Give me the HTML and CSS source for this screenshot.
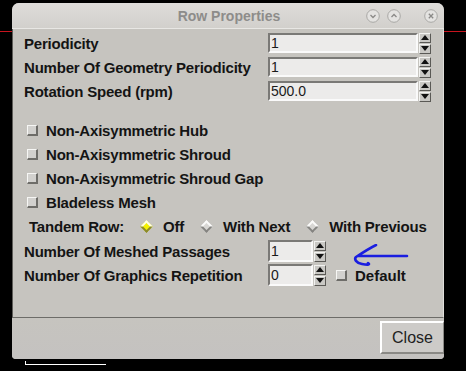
FILE: index.html
```html
<!DOCTYPE html>
<html lang="en">
<head>
  <meta charset="UTF-8" />
  <title>Row Properties</title>
  <link rel="stylesheet" href="styles.css">
</head>
<body>
  <div class="window">
    <div class="titlebar">
      <span class="title">Row Properties</span>
      <div class="wm-buttons">
        <span class="wm-btn">
          <svg width="14" height="14" viewBox="0 0 14 14"><circle cx="7" cy="7" r="6.3" fill="#e4e3e1" stroke="#a9a8a5"/><path d="M4.5 6 L7 8.5 L9.5 6" fill="none" stroke="#8a8987" stroke-width="1.3"/></svg>
        </span>
        <span class="wm-btn">
          <svg width="14" height="14" viewBox="0 0 14 14"><circle cx="7" cy="7" r="6.3" fill="#e4e3e1" stroke="#a9a8a5"/><path d="M4.5 8 L7 5.5 L9.5 8" fill="none" stroke="#8a8987" stroke-width="1.3"/></svg>
        </span>
        <span class="wm-btn close-x">
          <svg width="14" height="14" viewBox="0 0 14 14"><circle cx="7" cy="7" r="6.3" fill="#e4e3e1" stroke="#a9a8a5"/><path d="M4.8 4.8 L9.2 9.2 M9.2 4.8 L4.8 9.2" fill="none" stroke="#8a8987" stroke-width="1.3"/></svg>
        </span>
      </div>
    </div>

    <div class="panel">
      <div class="field-row">
        <span class="label">Periodicity</span>
        <div class="spin">
          <div class="input wide">1</div>
          <div class="arrows"><span class="up"></span><span class="down"></span></div>
        </div>
      </div>
      <div class="field-row">
        <span class="label">Number Of Geometry Periodicity</span>
        <div class="spin">
          <div class="input wide">1</div>
          <div class="arrows"><span class="up"></span><span class="down"></span></div>
        </div>
      </div>
      <div class="field-row">
        <span class="label">Rotation Speed (rpm)</span>
        <div class="spin">
          <div class="input wide">500.0</div>
          <div class="arrows"><span class="up"></span><span class="down"></span></div>
        </div>
      </div>

      <div class="checks">
        <div class="check-row"><span class="box"></span>Non-Axisymmetric Hub</div>
        <div class="check-row"><span class="box"></span>Non-Axisymmetric Shroud</div>
        <div class="check-row"><span class="box"></span>Non-Axisymmetric Shroud Gap</div>
        <div class="check-row"><span class="box"></span>Bladeless Mesh</div>
      </div>

      <div class="tandem">
        <span class="tandem-label">Tandem Row:</span>
        <span class="radio on"><span class="diamond"></span>Off</span>
        <span class="radio"><span class="diamond"></span>With Next</span>
        <span class="radio"><span class="diamond"></span>With Previous</span>
      </div>

      <div class="field-row small first">
        <span class="label">Number Of Meshed Passages</span>
        <div class="spin">
          <div class="input narrow">1</div>
          <div class="arrows"><span class="up"></span><span class="down"></span></div>
        </div>
        <svg class="pen-arrow" width="60" height="30" viewBox="0 0 60 30">
          <path d="M57 12 L8 12 M26 1 C20 4 12 9 6 13 C4 15 6 19 12 20 C17 21 21 21 18 19" fill="none" stroke="#1a1ee0" stroke-width="2.6" stroke-linecap="round" stroke-linejoin="round"/>
        </svg>
      </div>
      <div class="field-row small">
        <span class="label">Number Of Graphics Repetition</span>
        <div class="spin">
          <div class="input narrow">0</div>
          <div class="arrows"><span class="up"></span><span class="down"></span></div>
        </div>
        <span class="default"><span class="box"></span>Default</span>
      </div>
    </div>

    <div class="footer">
      <button class="close-btn">Close</button>
    </div>
  </div>
  <div class="under-edge"></div>
</body>
</html>
```

FILE: styles.css
```css
body {
  margin: 0;
  width: 466px;
  height: 371px;
  background: linear-gradient(#000 0, #000 31px, #c8141e 31px, #c8141e 32px, #000 32px);
  font-family: "Liberation Sans", Arial, sans-serif;
  overflow: hidden;
  position: relative;
}

.window {
  margin: 3px 0 0 12px;
  width: 432px;
  height: 356px;
  background: #c6c4bf;
  border-radius: 7px 7px 4px 4px;
  display: flex;
  flex-direction: column;
  overflow: hidden;
  position: relative;
  z-index: 1;
}

.titlebar {
  height: 25px;
  background: linear-gradient(#dedcda, #d2d0cc);
  border-bottom: 1px solid #e8e7e4;
  display: flex;
  align-items: center;
  justify-content: center;
  position: relative;
}

.title {
  color: #8d8c8a;
  font-weight: bold;
  font-size: 14px;
  margin-left: 2px;
}

.wm-buttons {
  position: absolute;
  right: 0;
  top: 0;
  height: 25px;
  display: flex;
  align-items: center;
}

.wm-btn {
  display: flex;
  margin-right: 7px;
}

.wm-btn.close-x {
  margin-left: 16px;
  margin-right: 6px;
}

.panel {
  height: 289px;
  box-sizing: border-box;
  border-left: 1px solid #5d5c58;
  border-right: 1px solid #e0dfdb;
  border-bottom: 1px solid #6d6c68;
  display: flex;
  flex-direction: column;
  padding-top: 2px;
}

.field-row {
  display: flex;
  align-items: center;
  height: 24px;
  padding-left: 11px;
  position: relative;
}

.field-row.first {
  margin-top: 1px;
}

.label {
  width: 244px;
  font-size: 15px;
  font-weight: bold;
  color: #141414;
  letter-spacing: -0.2px;
}

.spin {
  display: flex;
  align-items: center;
}

.input {
  height: 20px;
  box-sizing: border-box;
  background: #ecebea;
  border-top: 2px solid #7a7976;
  border-left: 2px solid #7a7976;
  border-bottom: 2px solid #fafafa;
  border-right: 2px solid #fafafa;
  font-size: 14px;
  line-height: 16px;
  padding-left: 1px;
  color: #1a1a1a;
}

.input.wide {
  width: 150px;
}

.input.narrow {
  width: 45px;
  height: 22px;
  line-height: 18px;
}

.arrows {
  display: flex;
  flex-direction: column;
  margin-left: 1px;
  gap: 1px;
}

.arrows span {
  width: 12px;
  height: 10px;
  background: #c9c8c4;
  border-top: 1px solid #f2f2f0;
  border-left: 1px solid #f2f2f0;
  border-right: 1px solid #5a5955;
  border-bottom: 1px solid #5a5955;
  box-sizing: border-box;
  position: relative;
}

.arrows span::after {
  content: "";
  position: absolute;
  left: 1px;
  border-left: 4px solid transparent;
  border-right: 4px solid transparent;
}

.arrows .up::after {
  top: 1px;
  border-bottom: 5px solid #111;
}

.arrows .down::after {
  top: 1px;
  border-top: 5px solid #111;
}

.checks {
  margin-top: 15px;
  display: flex;
  flex-direction: column;
}

.check-row {
  display: flex;
  align-items: center;
  height: 24px;
  padding-left: 14px;
  font-size: 15px;
  font-weight: bold;
  color: #141414;
  letter-spacing: -0.2px;
}

.box {
  width: 11px;
  height: 11px;
  box-sizing: border-box;
  background: #d2d1ce;
  border-top: 1px solid #f6f6f4;
  border-left: 1px solid #f6f6f4;
  border-right: 2px solid #6e6d69;
  border-bottom: 2px solid #6e6d69;
  margin-right: 8px;
  flex-shrink: 0;
}

.tandem {
  display: flex;
  align-items: center;
  height: 24px;
  padding-left: 16px;
  font-size: 15px;
  font-weight: bold;
  color: #141414;
  letter-spacing: -0.2px;
}

.tandem-label {
  width: 110px;
}

.radio {
  display: flex;
  align-items: center;
  margin-right: 15px;
}

.diamond {
  width: 5px;
  height: 5px;
  transform: rotate(45deg);
  background: #d8d7d4;
  border-top: 2px solid #fbfbfa;
  border-left: 2px solid #fbfbfa;
  border-right: 2px solid #858481;
  border-bottom: 2px solid #858481;
  margin: 0 12px 0 3px;
}

.radio.on .diamond {
  background: #f4f200;
  border-color: #fefee8 #8a8930 #8a8930 #fefee8;
}

.pen-arrow {
  position: absolute;
  left: 337px;
  top: 5px;
}

.default {
  display: flex;
  align-items: center;
  margin-left: 10px;
  font-size: 15px;
  font-weight: bold;
  color: #141414;
}

.footer {
  flex: 1;
  display: flex;
  justify-content: flex-end;
  align-items: flex-start;
  padding-top: 3px;
  background: linear-gradient(#c6c4bf, #c4c2c0);
}

.close-btn {
  width: 64px;
  height: 33px;
  font-family: "Liberation Sans", Arial, sans-serif;
  font-size: 16px;
  color: #222;
  background: #cdcbc8;
  border-top: 2px solid #ffffff;
  border-left: 2px solid #ffffff;
  border-right: 1px solid #8a8985;
  border-bottom: 2px solid #8a8985;
  padding: 0;
}

.under-edge {
  position: absolute;
  left: 25px;
  top: 361px;
  width: 81px;
  height: 4px;
  border-left: 1px solid #fff;
  border-bottom: 1px solid #fff;
  box-sizing: border-box;
}
```
